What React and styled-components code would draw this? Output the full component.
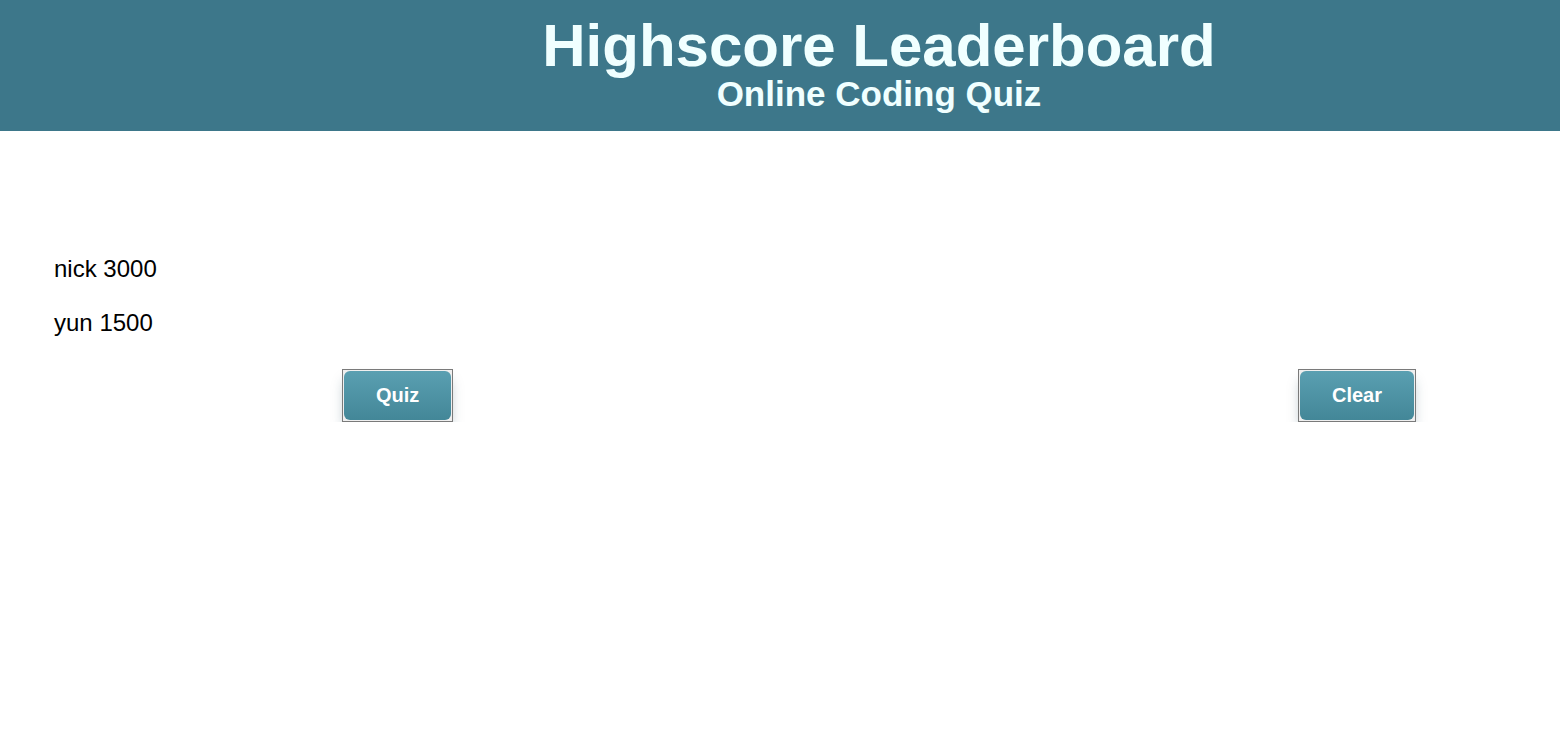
import React from "react";
import styled, { createGlobalStyle } from "styled-components";

const GlobalStyle = createGlobalStyle`
  body {
    margin: 0;
    background: #ffffff;
    font-family: "Liberation Sans", Arial, sans-serif;
  }
`;

const scores = [
  { name: "nick", score: 3000 },
  { name: "yun", score: 1500 },
];

function App() {
  return (
    <>
      <GlobalStyle />
      <Header>
        <Title>Highscore Leaderboard</Title>
        <Subtitle>Online Coding Quiz</Subtitle>
      </Header>
      <Main>
        <ScoreList>
          {scores.map((s) => (
            <ScoreRow key={s.name}>
              {s.name} {s.score}
            </ScoreRow>
          ))}
        </ScoreList>
        <ButtonBar>
          <ButtonFrame>
            <ButtonFace>Quiz</ButtonFace>
          </ButtonFrame>
          <ButtonFrame>
            <ButtonFace>Clear</ButtonFace>
          </ButtonFrame>
        </ButtonBar>
      </Main>
    </>
  );
}

const Header = styled.header`
  background-color: #3d778a;
  color: #f0ffff;
  height: 131px;
  box-sizing: border-box;
  padding: 16px 0 0 198px;
  display: flex;
  flex-direction: column;
  align-items: center;
`;

const Title = styled.h1`
  margin: 0;
  font-size: 60px;
  line-height: 60px;
  font-weight: bold;
`;

const Subtitle = styled.h2`
  margin: 0;
  font-size: 35px;
  line-height: 35px;
  font-weight: bold;
`;

const Main = styled.main`
  padding: 126px 0 0;
`;

const ScoreList = styled.ul`
  list-style: none;
  margin: 0;
  padding: 0 0 0 54px;
  display: flex;
  flex-direction: column;
  gap: 30px;
`;

const ScoreRow = styled.li`
  font-size: 24px;
  line-height: 24px;
  color: #000;
`;

const ButtonBar = styled.div`
  display: flex;
  justify-content: space-between;
  padding: 34px 144px 0 342px;
`;

const ButtonFrame = styled.button`
  border: 1px solid #7a7a7a;
  background: #efefef;
  padding: 1px;
  margin: 0;
  cursor: pointer;
  box-shadow: 0 9px 12px -3px rgba(30, 70, 85, 0.35);
`;

const ButtonFace = styled.span`
  display: block;
  padding: 13px 32px;
  border-radius: 6px;
  background: linear-gradient(#5a9fb1, #438798);
  color: #ffffff;
  font-family: "Liberation Sans", Arial, sans-serif;
  font-size: 20px;
  line-height: 23px;
  font-weight: bold;
`;

export default App;
